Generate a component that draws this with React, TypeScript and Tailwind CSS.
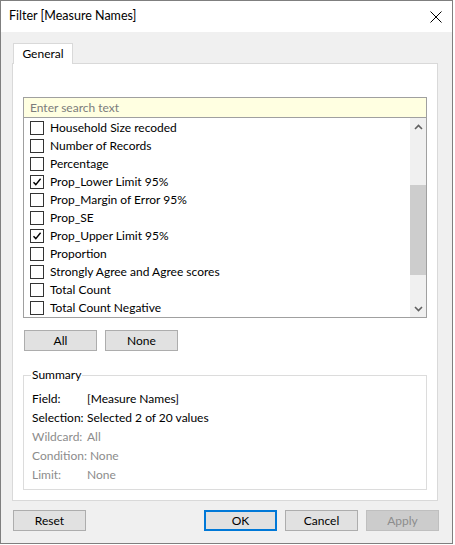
import React from 'react';

const items = [
  { label: 'Household Size recoded', checked: false },
  { label: 'Number of Records', checked: false },
  { label: 'Percentage', checked: false },
  { label: 'Prop_Lower Limit 95%', checked: true },
  { label: 'Prop_Margin of Error 95%', checked: false },
  { label: 'Prop_SE', checked: false },
  { label: 'Prop_Upper Limit 95%', checked: true },
  { label: 'Proportion', checked: false },
  { label: 'Strongly Agree and Agree scores', checked: false },
  { label: 'Total Count', checked: false },
  { label: 'Total Count Negative', checked: false },
];

const summary = [
  { k: 'Field:', v: '[Measure Names]', dim: false },
  { k: 'Selection:', v: 'Selected 2 of 20 values', dim: false },
  { k: 'Wildcard:', v: 'All', dim: true },
  { k: 'Condition:', v: 'None', dim: true },
  { k: 'Limit:', v: 'None', dim: true },
];

function Btn({ children, primary, disabled }: { children: React.ReactNode; primary?: boolean; disabled?: boolean }) {
  const base = 'w-[73px] h-[21px] flex items-center justify-center text-[12px]';
  if (disabled) return <div className={`${base} bg-[#cccccc] border border-[#bfbfbf] text-[#8d8d8d]`}>{children}</div>;
  if (primary) return <div className={`${base} bg-[#e1e1e1] border-2 border-[#0078d7] text-black`}>{children}</div>;
  return <div className={`${base} bg-[#e1e1e1] border border-[#adadad] text-black`}>{children}</div>;
}

function Checkbox({ checked }: { checked: boolean }) {
  return (
    <div className="w-[14px] h-[14px] border border-[#333333] bg-white flex items-center justify-center shrink-0">
      {checked && (
        <svg width="10" height="10" viewBox="0 0 10 10">
          <path d="M1.5 5.2 L3.8 7.6 L8.6 1.8" fill="none" stroke="#000" strokeWidth="1.4" />
        </svg>
      )}
    </div>
  );
}

export default function App() {
  return (
    <div className="w-[455px] h-[545px] bg-white" style={{ fontFamily: 'Lato, "Open Sans", sans-serif' }}>
      <div className="w-[453px] h-[544px] border border-[#7f7f7f] flex flex-col text-[12px] text-black">
        {/* Title bar */}
        <div className="h-[31px] bg-white flex items-center justify-between pl-[8px] pr-[10px]">
          <span className="text-[12.5px]">Filter [Measure Names]</span>
          <svg width="12" height="12" viewBox="0 0 12 12">
            <path d="M0.5 0.5 L11.5 11.5 M11.5 0.5 L0.5 11.5" stroke="#000" strokeWidth="1" />
          </svg>
        </div>

        {/* Body */}
        <div className="flex-1 bg-[#f0f0f0] flex flex-col pl-[11px] pt-[11px]">
          {/* Tab */}
          <div className="relative z-10 ml-[1px] w-[60px] h-[21px] -mb-px bg-white border border-[#d9d9d9] border-b-0 flex items-center justify-center">
            General
          </div>

          {/* Panel */}
          <div className="w-[426px] h-[438px] bg-white border border-[#d9d9d9] flex flex-col pl-[10px] pt-[33px]">
            {/* Search box */}
            <div className="w-[404px] h-[21px] bg-[#ffffe1] border border-[#a0a0a0] flex items-center pl-[6px] text-[#7c7c7c]">
              Enter search text
            </div>
            {/* List */}
            <div className="w-[404px] h-[200px] border border-[#a0a0a0] border-t-0 flex">
              <div className="flex-1 flex flex-col pt-[1px]">
                {items.map((it) => (
                  <div key={it.label} className="h-[18px] flex items-center pl-[6px] gap-[6px]">
                    <Checkbox checked={it.checked} />
                    <span>{it.label}</span>
                  </div>
                ))}
              </div>
              {/* Scrollbar */}
              <div className="w-[16px] bg-[#f0f0f0] flex flex-col">
                <div className="h-[17px] flex items-center justify-center">
                  <svg width="9" height="6" viewBox="0 0 9 6">
                    <path d="M1 5 L4.5 1.5 L8 5" fill="none" stroke="#606060" strokeWidth="1.6" />
                  </svg>
                </div>
                <div className="h-[50px]" />
                <div className="h-[90px] bg-[#cdcdcd]" />
                <div className="flex-1" />
                <div className="h-[17px] flex items-center justify-center">
                  <svg width="9" height="6" viewBox="0 0 9 6">
                    <path d="M1 1 L4.5 4.5 L8 1" fill="none" stroke="#606060" strokeWidth="1.6" />
                  </svg>
                </div>
              </div>
            </div>

            {/* All / None */}
            <div className="flex gap-[8px] mt-[12px] ml-[1px]">
              <Btn>All</Btn>
              <Btn>None</Btn>
            </div>

            {/* Summary */}
            <fieldset className="w-[404px] h-[124px] mt-[15px] border border-[#dcdcdc] pl-[8px] pr-[8px] pt-[5px]">
              <legend className="px-[1px] ml-[-1px]">Summary</legend>
              <div className="flex flex-col">
                {summary.map((s) => (
                  <div key={s.k} className={`h-[19px] flex items-center whitespace-nowrap ${s.dim ? 'text-[#8c8c8c]' : 'text-black'}`}>
                    <span className="min-w-[55px] pr-[3px] shrink-0">{s.k}</span>
                    <span>{s.v}</span>
                  </div>
                ))}
              </div>
            </fieldset>
          </div>

          {/* Bottom buttons */}
          <div className="flex mt-[9px] pl-[1px] pr-[13px]">
            <Btn>Reset</Btn>
            <div className="flex-1" />
            <div className="flex gap-[8px]">
              <Btn primary>OK</Btn>
              <Btn>Cancel</Btn>
              <Btn disabled>Apply</Btn>
            </div>
          </div>
        </div>
      </div>
    </div>
  );
}
